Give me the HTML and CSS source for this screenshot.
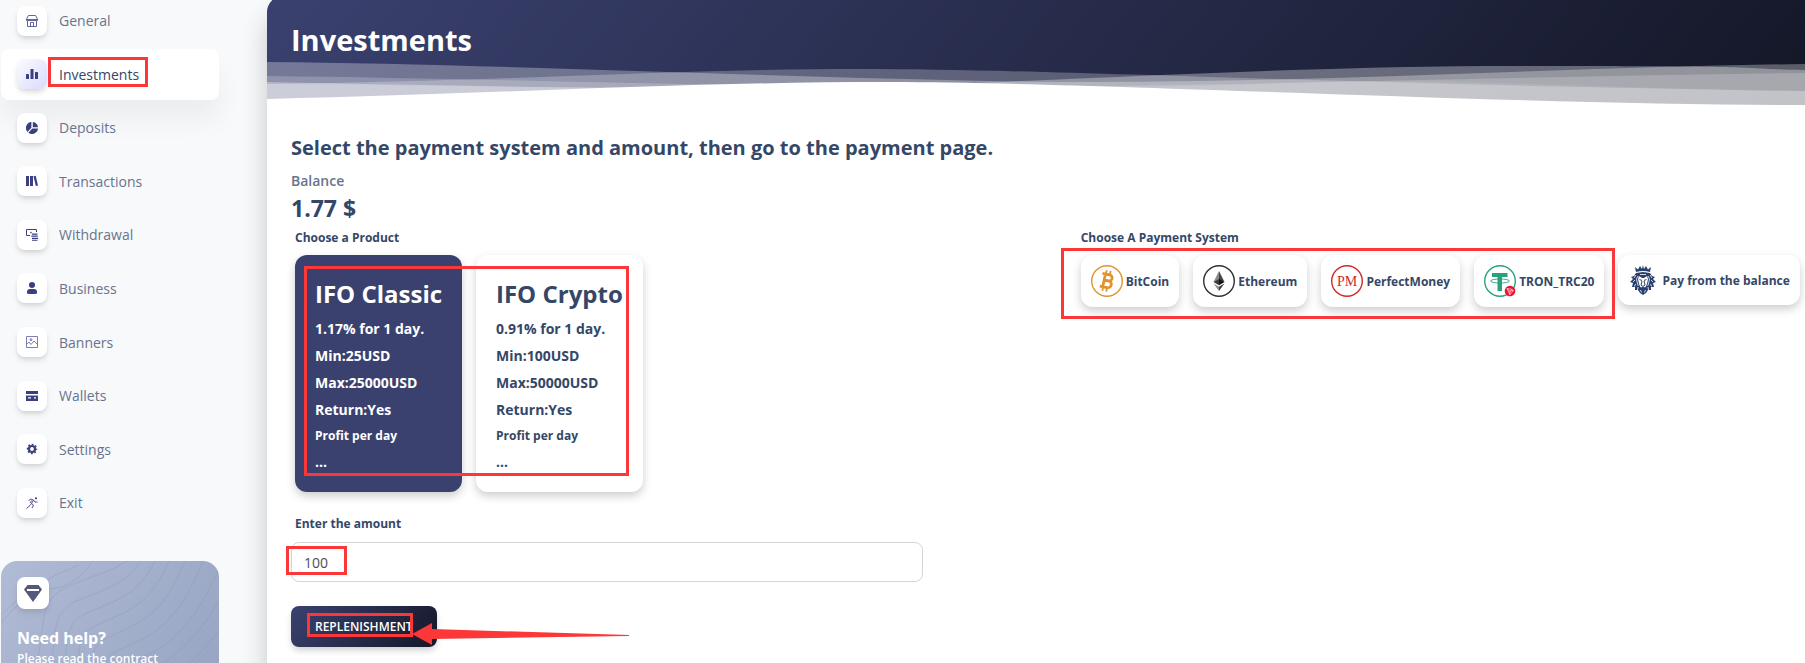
FILE: index.html
```html
<!DOCTYPE html>
<html lang="en">
<head>
    <meta charset="UTF-8">
    <meta name="viewport" content="width=device-width, initial-scale=1.0">
    <title>Investments</title>
    <link rel="stylesheet" href="styles.css">
</head>
<body>
    <div class="layout">
        <!-- Sidebar -->
        <aside class="sidebar">
            <nav>
                <ul class="menu">
                    <li><a class="menu-link" href="#general">
                        <span class="menu-icon"><svg viewBox="0 0 12 12" fill="none" stroke="#3b3f80"><path d="M2.5 .5h7l2 3.5v1.5H.5V4zM1.5 6v5.500h9V6M4.500 11.500v-4h3v4M1 4.500h10" stroke-width=".8"/></svg></span>
                        General</a></li>
                    <li><a class="menu-link active" href="#investments">
                        <span class="menu-icon"><svg viewBox="0 0 12 12"><rect y="6" width="3" height="5" rx=".5"/><rect x="4.500" y="1" width="3" height="10" rx=".5"/><rect x="9" y="4" width="3" height="7" rx=".5"/></svg></span>
                        Investments</a></li>
                    <li><a class="menu-link" href="#deposits">
                        <span class="menu-icon"><svg viewBox="0 0 12 12"><path d="M5.400 0v5.800L1.400 9.900A6 6 0 0 1 5.400 0zM6.800 0A6 6 0 0 1 12 5.300H6.800zM6.300 6.600H12A6 6 0 0 1 2.300 10.700z"/></svg></span>
                        Deposits</a></li>
                    <li><a class="menu-link" href="#transactions">
                        <span class="menu-icon"><svg viewBox="0 0 12 12"><path d="M0 1h3v10H0zM4 1h3v10H4zM7.500 1.300l2.200-.5L12 10.600l-2.200.5z"/></svg></span>
                        Transactions</a></li>
                    <li><a class="menu-link" href="#withdrawal">
                        <span class="menu-icon"><svg viewBox="0 0 12 12"><path d="M4 6.500H.5v-6h10V3" fill="none" stroke="#3b3f80"/><circle cx="5" cy="3.600" r=".8"/><path d="M6 4.500h5.500v1.300H6zM5.300 6.600h6.400v1.200H5.300zM6 8.700h6v1.200H6zM6 10.700h5.500v1H6z"/></svg></span>
                        Withdrawal</a></li>
                    <li><a class="menu-link" href="#business">
                        <span class="menu-icon"><svg viewBox="0 0 12 12"><circle cx="6" cy="3" r="3"/><path d="M1 11.500V10q0-3 3-3h4q3 0 3 3v1.500q-5 1-10 0z"/></svg></span>
                        Business</a></li>
                    <li><a class="menu-link" href="#banners">
                        <span class="menu-icon"><svg viewBox="0 0 12 12" fill="none" stroke="#6d70a6"><path d="M.5.5h11v11H.5zM.5 8.500L3 6l2 2.500L8 5l3.500 3.500" stroke-width=".9"/><circle cx="5" cy="3.700" r="1"/></svg></span>
                        Banners</a></li>
                    <li><a class="menu-link" href="#wallets">
                        <span class="menu-icon"><svg viewBox="0 0 12 12"><path fill-rule="evenodd" d="M0 1h12v3H0zM0 5.500h12V11H0zM2 7.300v1.200h3V7.300zM8 7.300v1.200h2V7.300z"/></svg></span>
                        Wallets</a></li>
                    <li><a class="menu-link" href="#settings">
                        <span class="menu-icon"><svg viewBox="0 0 12 12" fill="none" stroke="#3b3f80"><circle cx="6" cy="6" r="3" stroke-width="2.200"/><circle cx="6" cy="6" r="4.600" stroke-width="1.400" stroke-dasharray="1.800 1.813" stroke-dashoffset=".9"/></svg></span>
                        Settings</a></li>
                    <li><a class="menu-link" href="#exit">
                        <span class="menu-icon"><svg viewBox="0 0 12 12" fill="none" stroke="#3b3f80"><circle cx="10" cy="1.300" r="1.100" fill="#3b3f80" stroke="none"/><path d="M2.500 3.500L5 2l2.500 1-2 3.500L7.500 8 6 11M5.500 6.500L4 8.500.5 11.500M7.500 3l1.500 2h2.500M5.500 3.500L4.300 6" stroke-width=".9"/></svg></span>
                        Exit</a></li>
                </ul>
            </nav>

            <div class="help-card">
                <svg class="help-lines" viewBox="0 0 218 130" preserveAspectRatio="xMidYMin slice">
                    <path d="M0 62Q25 30 50 28T92 0M0 54Q30 22 78 4"/>
                    <path d="M28 130C50 70 30 40 70 24S110 10 126 0M42 130C62 80 42 52 80 38S124 20 140 0M56 130C74 90 54 64 90 50S138 30 154 0M70 130C86 96 66 76 100 62S150 40 168 0M84 130C98 104 80 88 112 74S164 50 184 0M98 130C110 110 94 98 124 86S178 60 202 0M112 130C122 118 108 108 136 98S190 70 218 8M126 130C140 116 150 112 168 98S200 70 218 40M150 130C170 120 190 104 218 70"/>
                </svg>
                <span class="help-icon">
                    <svg viewBox="0 0 18 17"><path fill="#54597c" d="M3.500 0h11L18 4.500 9 17 0 4.500z"/><path fill="#fff" d="M3 4h12v2H3z"/></svg>
                </span>
                <h6 class="help-title">Need help?</h6>
                <p class="help-text">Please read the contract</p>
            </div>
        </aside>

        <!-- Main Content Area -->
        <main class="main">
            <header class="hero">
                <h1 class="hero-title">Investments</h1>
                <svg class="waves" viewBox="0 0 1538 60" preserveAspectRatio="none">
                    <path fill-opacity=".3" d="M0 12C250 14 600 32 830 32S1300 17 1538 14V60H0z"/>
                    <path fill-opacity=".33" d="M0 32C200 36 350 39 500 38C750 36 980 16 1253 16S1450 18 1538 20V60H0z"/>
                    <path fill-opacity=".25" d="M0 34C250 31 400 19 593 19S1050 34 1538 41V60H0z"/>
                    <path fill-opacity=".2" d="M0 26C250 29 450 37 700 37S1250 26 1538 23V60H0z"/>
                    <path fill-opacity=".1" d="M0 34C200 36 450 40 700 40C900 40 1000 32 1100 31S1400 40 1538 41V60H0z"/>
                    <path d="M0 49C250 43 420 32 623 32S1250 55 1538 55V60H0z"/>
                </svg>
            </header>

            <form class="content">
                <h2 class="lead">Select the payment system and amount, then go to the payment page.</h2>
                <p class="balance-label">Balance</p>
                <p class="balance">1.77 $</p>

                <div class="columns">
                    <section>
                        <h3 class="label">Choose a Product</h3>
                        <div class="products">
                            <label class="product selected">
                                <input type="radio" name="product" checked>
                                <span class="product-name">IFO Classic</span>
                                <span>1.17% for 1 day.</span>
                                <span>Min:25USD</span>
                                <span>Max:25000USD</span>
                                <span>Return:Yes</span>
                                <small>Profit per day</small>
                                <span>...</span>
                            </label>
                            <label class="product">
                                <input type="radio" name="product">
                                <span class="product-name">IFO Crypto</span>
                                <span>0.91% for 1 day.</span>
                                <span>Min:100USD</span>
                                <span>Max:50000USD</span>
                                <span>Return:Yes</span>
                                <small>Profit per day</small>
                                <span>...</span>
                            </label>
                        </div>
                        <label class="label amount-label" for="amount">Enter the amount</label>
                        <input class="amount" id="amount" type="text" value="100">
                        <button class="submit" type="submit">REPLENISHMENT</button>
                    </section>

                    <section>
                        <h3 class="label payments-label">Choose A Payment System</h3>
                        <div class="payments">
                            <label class="payment">
                                <input type="radio" name="payment">
                                <svg viewBox="0 0 32 32"><circle cx="16" cy="16" r="15.300" fill="none" stroke="#e0932f" stroke-width="1.400"/>
                                    <g transform="rotate(12 16 16)" fill="none" stroke="#e0932f"><path d="M10 9.500h7.500a2.800 2.800 0 0 1 0 6H13m4.500 0a3.300 3.300 0 0 1 0 7H10M13 9.500v13" stroke-width="2.800"/><path d="M13.500 5.500V9M17.500 5.500V9M13.500 23v3.500M17.500 23v3.500" stroke-width="1.800"/></g></svg>
                                BitCoin
                            </label>
                            <label class="payment">
                                <input type="radio" name="payment">
                                <svg viewBox="0 0 32 32"><circle cx="16" cy="16" r="15.300" fill="none" stroke="#2f3030" stroke-width="1.400"/>
                                    <path fill="#8a8a8a" d="M16 6v9l-5.500 2z"/><path fill="#444" d="M16 6v9l5.500 2z"/><path fill="#3c3c3b" d="M10.500 17l5.500-3v6.300z"/><path fill="#141414" d="M21.500 17L16 14v6.300z"/><path fill="#8a8a8a" d="M10.500 18.500l5.500 3.300V26z"/><path fill="#3c3c3b" d="M21.500 18.500L16 21.800V26z"/></svg>
                                Ethereum
                            </label>
                            <label class="payment">
                                <input type="radio" name="payment">
                                <svg viewBox="0 0 32 32"><circle cx="16" cy="16" r="15.300" fill="none" stroke="#cf2a2a" stroke-width="1.400"/><text class="pm" x="16" y="21">PM</text></svg>
                                PerfectMoney
                            </label>
                            <label class="payment">
                                <input type="radio" name="payment">
                                <svg viewBox="0 0 32 32"><circle cx="16" cy="16" r="15.300" fill="none" stroke="#2aa27e" stroke-width="1.400"/>
                                    <path fill="#2aa27e" d="M8 8h15.500v4H18v14h-4.500V12H8z"/><ellipse cx="16" cy="16" rx="9.500" ry="2" fill="none" stroke="#2aa27e" stroke-width=".9"/>
                                    <circle cx="26" cy="26" r="5.300" fill="#ef0f2f"/><path d="M23 23.500l5 .8 1.400 1.300-3.600 4.200zl2.800 2.800 3.400-.8M25.800 26.300v3.500M25.800 26.300l2.200-2" fill="none" stroke="#fff" stroke-width=".6"/></svg>
                                TRON_TRC20
                            </label>
                            <label class="payment own">
                                <input type="radio" name="payment">
                                <svg viewBox="0 0 26 30"><g fill="#27406e"><path d="M6 7L5 2l3 2.500L10 1l2 3 1-4 1 4 2-3 2 3.500L21 2l-1 5q-7-2-14 0z"/><path d="M6 8l7-1 7 1 2 3 3 1-2 2 3 3-3 1 1 4-3 0 0 3-3 0-2 3-3 2-3-2-2-3-3 0 0-3-3 0 1-4-3-1 3-3-2-2 3-1z"/></g>
                                    <path fill="#fff" d="M9 11l3 2h2l3-2 1 3-1 5-2 4h-4l-2-4-1-5z"/><path d="M9.500 14.500l2.500 1M16.500 14.500l-2.500 1M12 16l-1 4 2 1.500 2-1.500-1-4M10.500 23q2.500-1.500 5 0" fill="none" stroke="#27406e"/><path d="M6 10l-2 3M5 15l-2 2M5.500 19l-1 2.500M8 22l-.5 3M20 10l2 3M21 15l2 2M20.500 19l1 2.500M18 22l.5 3M10.500 25l1 2.500M15.500 25l-1 2.500M8 11l-1.500 3 .8 4 1 3M18 11l1.500 3-.8 4-1 3M10 9.500h6" fill="none" stroke="#fff" stroke-width=".8"/></svg>
                                Pay from the balance
                            </label>
                        </div>
                    </section>
                </div>
            </form>
        </main>
    </div>

    <!-- Callouts over the page -->
    <div class="mark mark-menu"></div>
    <div class="mark mark-products"></div>
    <div class="mark mark-payments"></div>
    <div class="mark mark-amount"></div>
    <div class="mark mark-submit"></div>
    <svg class="arrow" viewBox="0 0 217 22"><path d="M0 11L20 0v6L217 12v1L20 16v6z"/></svg>
</body>
</html>
```

FILE: styles.css
```css
* {
    margin: 0;
    padding: 0;
    box-sizing: border-box;
}

body {
    position: relative;
    height: 100vh;
    overflow: hidden;
    background: #f8f9fb;
    color: #344767;
    font-family: 'Open Sans', 'Noto Sans', sans-serif;
    font-size: 14px;
}

input,
button {
    font: inherit;
}

.layout {
    display: flex;
    height: 100vh;
}

/* Sidebar */
.sidebar {
    width: 267px;
    flex-shrink: 0;
    padding: 0 48px 0 1px;
    overflow: hidden;
}

.menu {
    display: grid;
    grid-auto-rows: 1fr;
    height: 536px;
    margin-top: -5px;
    list-style: none;
}

.menu-link {
    display: flex;
    align-items: center;
    gap: 12px;
    height: 51px;
    padding: 0 16px;
    border-radius: 8px;
    color: #67748e;
    text-decoration: none;
}

.menu-link.active {
    background: #fff;
    color: #344767;
    box-shadow: 0 20px 27px 0 rgba(0, 0, 0, 0.05);
}

.menu-icon {
    display: flex;
    align-items: center;
    justify-content: center;
    width: 30px;
    height: 30px;
    border-radius: 8px;
    background: #fff;
    box-shadow: 0 4px 6px -1px rgba(0, 0, 0, 0.12), 0 2px 4px -1px rgba(0, 0, 0, 0.07);
}

.menu-icon svg {
    width: 12px;
    height: 12px;
    fill: #3b3f80;
}

.menu-icon svg[fill="none"] {
    fill: none;
}

.active .menu-icon {
    background: linear-gradient(135deg, #fbfbff, #d9dcfb);
}

.help-card {
    position: relative;
    height: 190px;
    margin-top: 30px;
    padding: 16px;
    border-radius: 16px;
    overflow: hidden;
    background: linear-gradient(120deg, #b0bbd5, #94a2c0);
    color: #fff;
}

.help-lines {
    position: absolute;
    inset: 0;
    width: 100%;
    fill: none;
    stroke: #8190b4;
    stroke-opacity: 0.3;
}

.help-icon {
    position: relative;
    display: flex;
    align-items: center;
    justify-content: center;
    width: 32px;
    height: 32px;
    border-radius: 8px;
    background: #fff;
    box-shadow: 0 4px 6px -1px rgba(0, 0, 0, 0.12);
}

.help-icon svg {
    width: 18px;
}

.help-title {
    position: relative;
    margin-top: 17px;
    font-size: 16px;
    line-height: 24px;
    font-weight: 700;
}

.help-text {
    position: relative;
    font-size: 12px;
    line-height: 18px;
    font-weight: 600;
}

/* Main */
.main {
    flex: 1;
    min-width: 0;
    margin-top: -4px;
    border-radius: 16px 0 0 0;
    background: #fff;
    box-shadow: 0 20px 27px 0 rgba(0, 0, 0, 0.2);
}

.hero {
    display: flex;
    flex-direction: column;
    border-radius: 16px 0 0 0;
    background: linear-gradient(130deg, #3a416f, #141727);
}

.hero-title {
    padding: 24px 24px 0;
    color: #fff;
    font-size: 29px;
    line-height: 40px;
    font-weight: 700;
}

.waves {
    width: 100%;
    height: 60px;
    margin-top: -10px;
    fill: #fff;
}

.content {
    padding: 24px;
}

.lead {
    font-size: 20px;
    line-height: 28px;
    font-weight: 700;
}

.balance-label {
    margin-top: 8px;
    color: #67748e;
    font-weight: 600;
    line-height: 22px;
}

.balance {
    font-size: 23px;
    line-height: 32px;
    font-weight: 700;
}

.columns {
    display: grid;
    grid-template-columns: 53% 47%;
    margin-top: 5px;
}

.label {
    display: block;
    padding-left: 4px;
    font-size: 12px;
    line-height: 18px;
    font-weight: 700;
}

.payments-label {
    padding-left: 0;
}

.products,
.payments {
    display: flex;
    align-items: flex-start;
    gap: 14px;
    margin-top: 8px;
}

.products {
    padding-left: 4px;
}

.product,
.payment {
    border-radius: 12px;
    background: #fff;
    box-shadow: 0 4px 10px rgba(0, 0, 0, 0.2);
    font-weight: 700;
    cursor: pointer;
}

.product input,
.payment input {
    position: absolute;
    opacity: 0;
}

.product {
    display: flex;
    flex-direction: column;
    gap: 7px;
    width: 167px;
    padding: 20px;
    line-height: 20px;
    white-space: nowrap;
}

.product.selected {
    background: #3a416f;
    color: #fff;
}

.product-name {
    font-size: 24px;
    line-height: 37px;
}

.product small {
    font-size: 12px;
    line-height: 18px;
}

.amount-label {
    margin-top: 23px;
}

.amount {
    display: block;
    width: 80%;
    height: 40px;
    margin-top: 9px;
    padding: 0 12px;
    border: 1px solid #d2d6da;
    border-radius: 8px;
    color: #495057;
}

.submit {
    display: block;
    height: 41px;
    margin-top: 24px;
    padding: 0 24px;
    border: 0;
    border-radius: 8px;
    background: linear-gradient(130deg, #3a416f, #141727);
    box-shadow: 0 4px 7px -1px rgba(0, 0, 0, 0.2);
    color: #fff;
    font-size: 12px;
    font-weight: 600;
}

.payment {
    display: flex;
    align-items: center;
    gap: 3px;
    height: 52px;
    padding: 0 10px;
    font-size: 12px;
    white-space: nowrap;
}

.payment svg {
    width: 32px;
    height: 32px;
}

.payment.own {
    gap: 6px;
    height: 50px;
    padding-left: 12px;
}

.payment.own svg {
    width: 26px;
    height: 30px;
}

.pm {
    fill: #cf2a2a;
    font-family: 'Liberation Serif', serif;
    font-size: 14px;
    font-weight: 400;
    text-anchor: middle;
}

/* Callouts */
.mark {
    position: absolute;
    border: 3px solid #fc3737;
}

.mark-menu {
    left: 48px;
    top: 57px;
    width: 100px;
    height: 30px;
}

.mark-products {
    left: 304px;
    top: 266px;
    width: 325px;
    height: 210px;
}

.mark-payments {
    left: 1061px;
    top: 248px;
    width: 554px;
    height: 71px;
}

.mark-amount {
    left: 286px;
    top: 546px;
    width: 61px;
    height: 29px;
}

.mark-submit {
    left: 307px;
    top: 613px;
    width: 106px;
    height: 24px;
}

.arrow {
    position: absolute;
    left: 412px;
    top: 623px;
    width: 217px;
    height: 22px;
    fill: #fc3737;
}
```
